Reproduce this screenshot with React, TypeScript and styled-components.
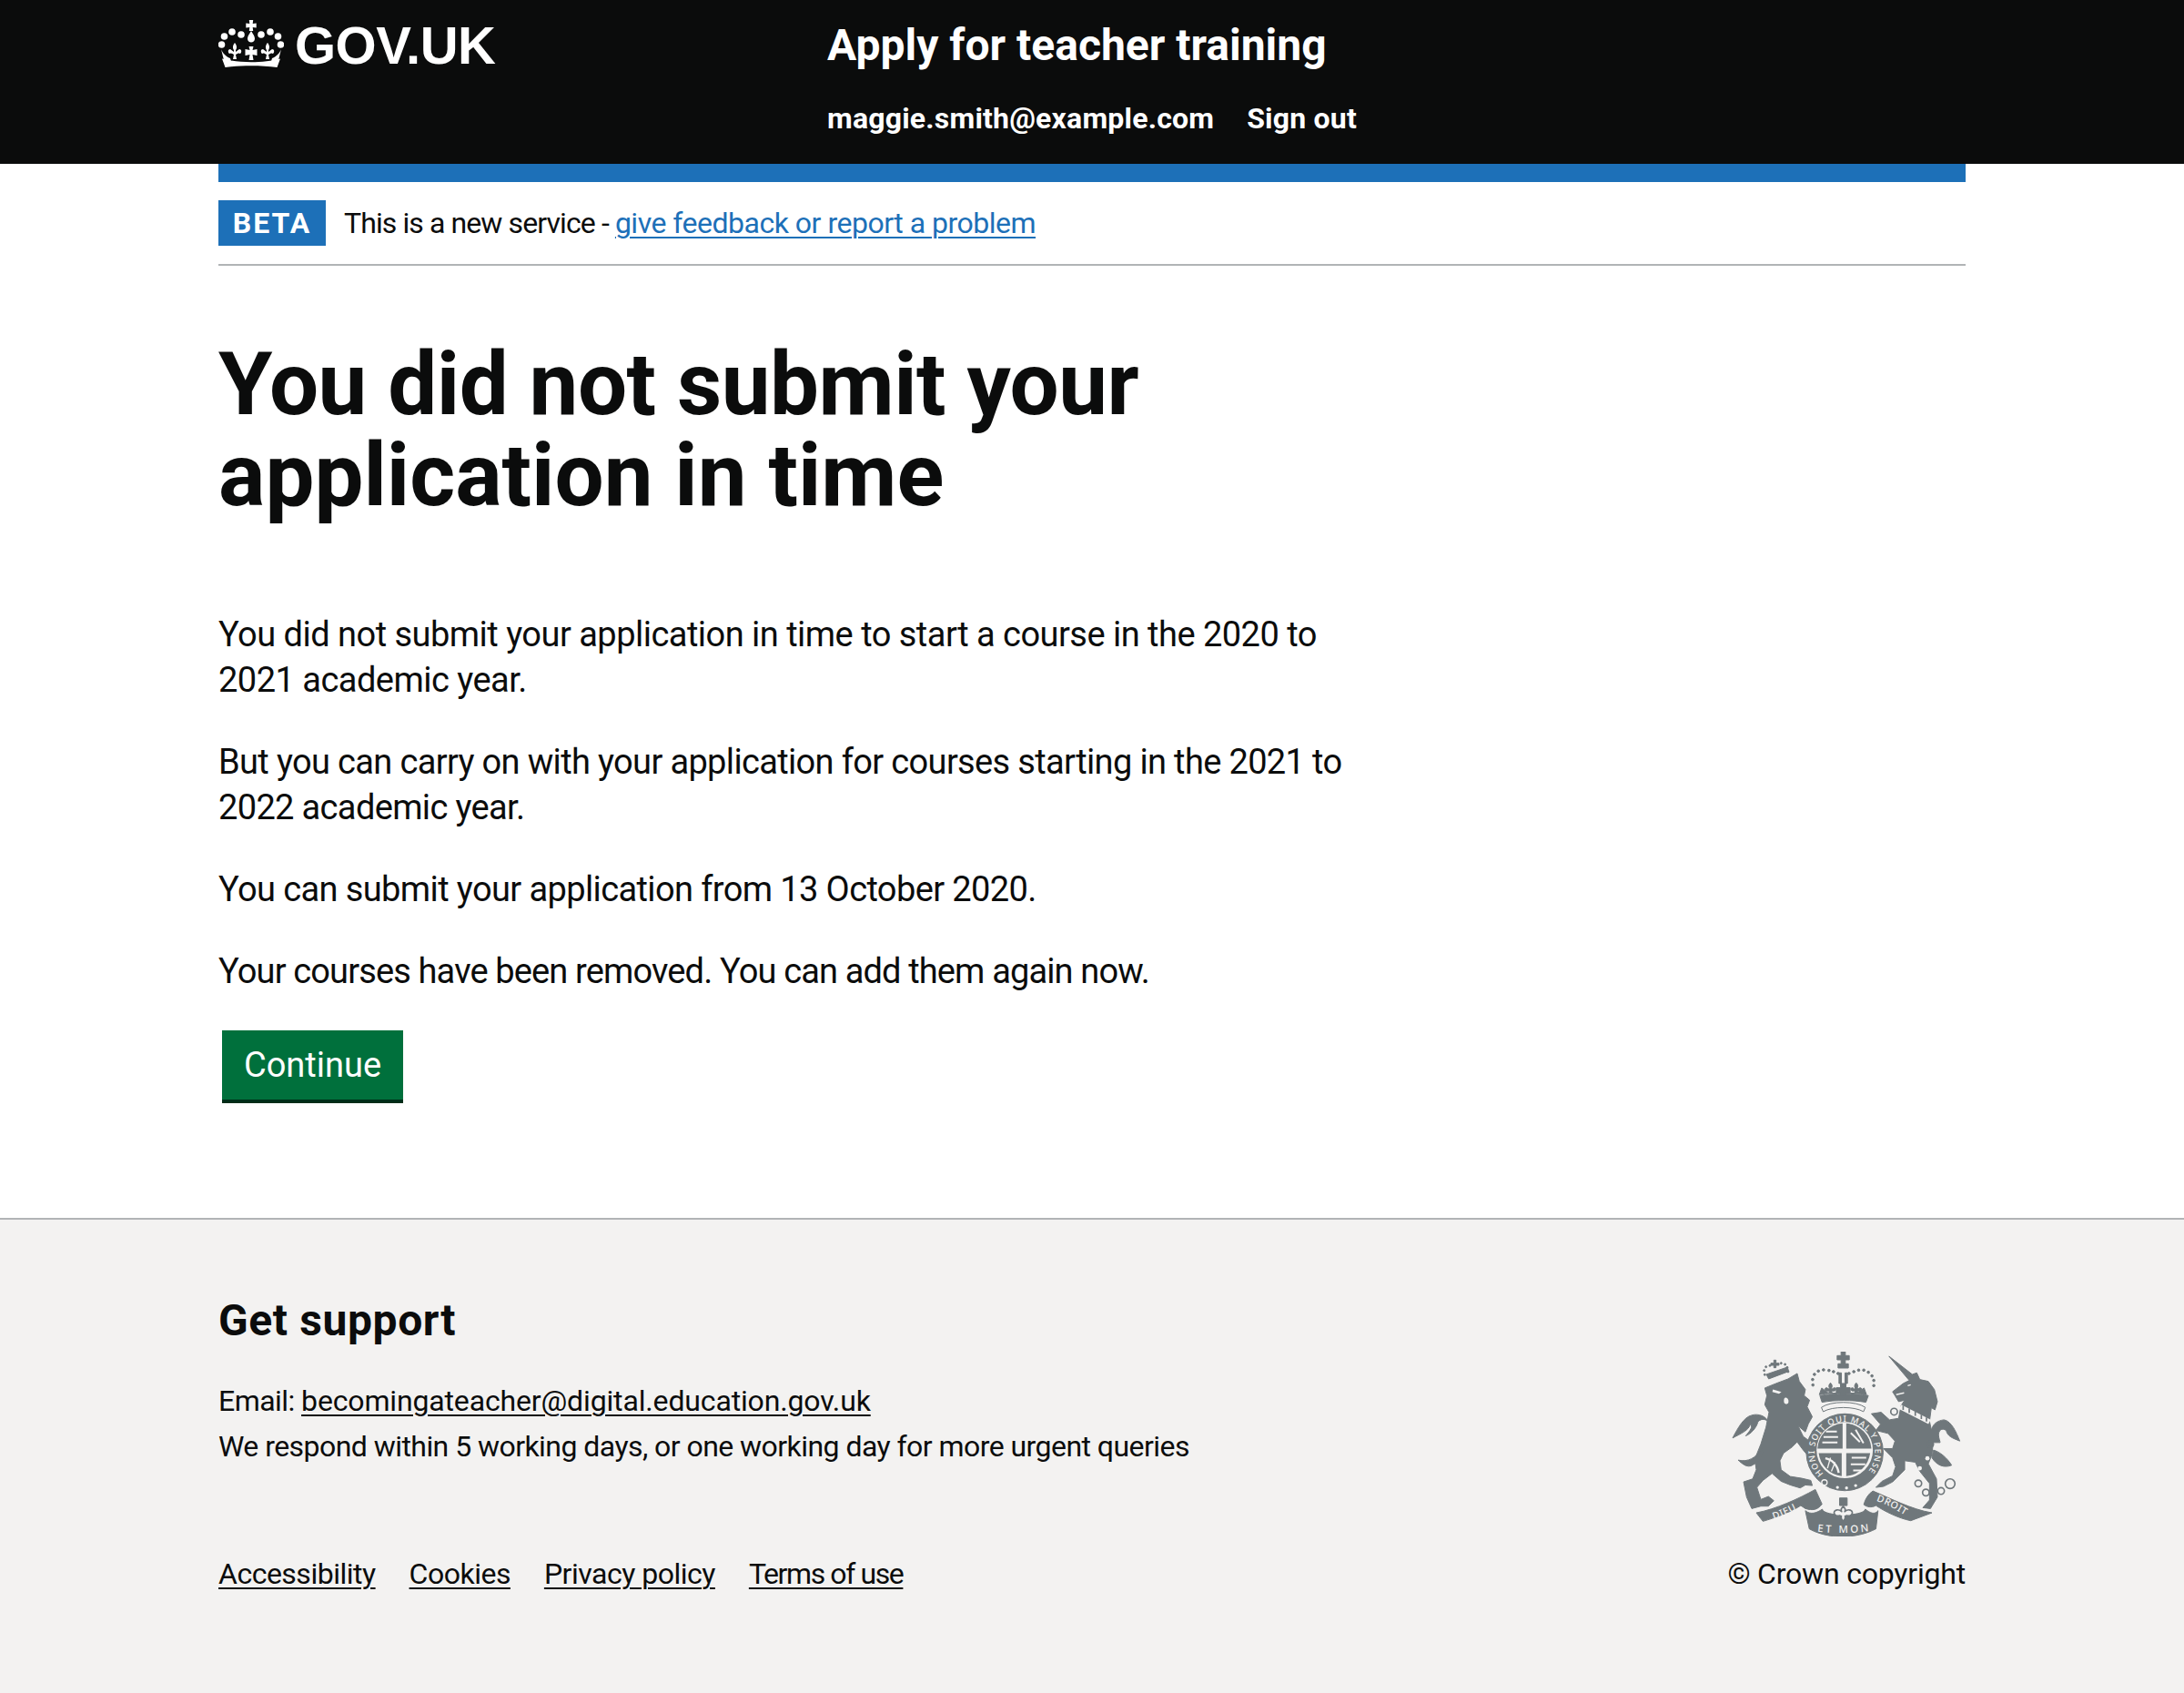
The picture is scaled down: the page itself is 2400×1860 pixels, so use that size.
import styled, { createGlobalStyle } from "styled-components";

const GlobalStyle = createGlobalStyle`
  html, body {
    margin: 0;
    padding: 0;
    background: #ffffff;
    font-family: "Roboto", Arial, sans-serif;
    color: #0b0c0c;
  }
`;

const Page = styled.div`
  width: 2400px;
  height: 1860px;
  display: flex;
  flex-direction: column;
`;
const Container = styled.div`
  width: 1920px;
  margin: 0 auto;
`;
const Header = styled.header`
  background: #0b0c0c;
  height: 180px;
  color: #fff;
  flex: none;
`;
const HeaderInner = styled(Container)`
  display: flex;
`;
const Logo = styled.a`
  width: 669px;
  height: 98px;
  display: flex;
  align-items: center;
  gap: 12px;
  color: #fff;
  font-family: "Liberation Sans", Arial, sans-serif;
  font-weight: 700;
  font-size: 58px;
  letter-spacing: -0.5px;
`;
const ServiceColumn = styled.div`
  display: flex;
  flex-direction: column;
`;
const ServiceName = styled.div`
  font-size: 48px;
  font-weight: 700;
  line-height: 100px;
`;
const HeaderNav = styled.nav`
  display: flex;
  gap: 36px;
  font-size: 32px;
  font-weight: 700;
  line-height: 60px;
  letter-spacing: 0.2px;
`;
const Main = styled(Container)`
  flex: 1;
`;
const BlueBar = styled.div`
  height: 20px;
  background: #1d70b8;
`;
const PhaseBanner = styled.div`
  display: flex;
  align-items: center;
  gap: 20px;
  padding: 20px 0;
  border-bottom: 2px solid #b1b4b6;
  font-size: 32px;
`;
const PhaseTag = styled.strong`
  display: block;
  background: #1d70b8;
  color: #fff;
  width: 118px;
  height: 50px;
  line-height: 50px;
  text-align: center;
  font-size: 32px;
  font-weight: 700;
  letter-spacing: 2px;
`;
const PhaseText = styled.span`
  letter-spacing: -0.9px;
`;
const BlueLink = styled.a`
  color: #1d70b8;
  letter-spacing: -0.5px;
  text-decoration: underline;
  text-decoration-thickness: 2px;
  text-underline-offset: 4px;
`;
const Title = styled.h1`
  margin: 80px 0 100px;
  font-size: 96px;
  line-height: 100px;
  font-weight: 700;
`;
const TitleLine = styled.span<{ $tracking: number }>`
  display: block;
  letter-spacing: ${(p) => p.$tracking}px;
`;
const Paragraph = styled.p<{ $tracking: number }>`
  margin: 0 0 40px;
  width: 1280px;
  font-size: 38px;
  line-height: 50px;
  letter-spacing: ${(p) => p.$tracking}px;
`;
const ContinueButton = styled.button`
  display: block;
  margin: 0 0 0 4px;
  width: 199px;
  height: 76px;
  border: 0;
  padding: 0;
  background: #00703c;
  box-shadow: 0 4px 0 #002d18;
  color: #fff;
  font-family: inherit;
  font-size: 38px;
  line-height: 1;
`;
const Footer = styled.footer`
  flex: none;
  height: 522px;
  box-sizing: border-box;
  background: #f3f2f1;
  border-top: 2px solid #b1b4b6;
  padding-top: 86px;
`;
const FooterInner = styled(Container)`
  display: flex;
  justify-content: space-between;
  align-items: flex-end;
`;
const SupportTitle = styled.h2`
  margin: 0 0 38px;
  font-size: 48px;
  line-height: 50px;
  font-weight: 700;
  letter-spacing: 0.6px;
`;
const SupportLine = styled.div`
  font-size: 32px;
  line-height: 50px;
  letter-spacing: -0.55px;
`;
const FooterLinks = styled.ul`
  list-style: none;
  margin: 90px 0 0;
  padding: 0;
  display: flex;
  gap: 37px;
  font-size: 32px;
  line-height: 50px;
  letter-spacing: -0.5px;
`;
const FooterLink = styled.a<{ $tracking?: number }>`
  color: #0b0c0c;
  letter-spacing: ${(p) => (p.$tracking === undefined ? "inherit" : `${p.$tracking}px`)};
  text-decoration: underline;
  text-decoration-thickness: 2px;
  text-underline-offset: 4px;
`;
const Copyright = styled.div`
  display: flex;
  flex-direction: column;
  align-items: flex-end;
  font-size: 32px;
  line-height: 50px;
  letter-spacing: -0.2px;
`;
const Crest = styled.svg`
  display: block;
  width: 252px;
  height: 203px;
  margin: 0 5px 16px 0;
`;

const logoFleur =
  "M0-10C2.5-7 2.5-4 1-2v2l4-3c2.500 0 3 3 1 5-1-1-3-.5-5 1l1 5h-4l1-5c-2-1.500-4-2-5-1-2-2-1.500-5 1-5l4 3v-2c-1.500-2-1.500-5 1-8z";

const CrownLogo = () => (
  <svg width="72" height="54" viewBox="0 0 72 54" fill="#fff" aria-hidden="true">
    <path d="M33.800 0h4.400l-.5 4 4-.5v5l-4-.5.5 4h-4.400l.5-4-4 .5v-5l4 .5z" />
    <path d="M36 12c2.500 4 4 6 4 8.500 0 2.500-2 4-4 4s-4-1.500-4-4c0-2.500 1.500-4.500 4-8.500z" />
    <circle cx="15" cy="13" r="3.800" />
    <circle cx="25" cy="16" r="3.800" />
    <circle cx="47" cy="16" r="3.800" />
    <circle cx="57" cy="13" r="3.800" />
    <circle cx="6.500" cy="18" r="3.800" />
    <circle cx="65.500" cy="18" r="3.800" />
    <circle cx="3.500" cy="27" r="3.800" />
    <circle cx="68.500" cy="27" r="3.800" />
    <path d={logoFleur} transform="translate(18 35)" />
    <path d={logoFleur} transform="translate(54 35)" />
    <path d="M33.500 29h5l-1 4 5-1v7l-5-1 1 6h-5l1-6-5 1v-7l5 1z" />
    <path d="M7.500 52C25 49.500 47 49.500 64.500 52L68 42.500C50 47.500 22 47.500 4 42.500z" />
    <path d="M3 32c1.500 4 5 8 10 10l1 3.500-8-1.500z" />
    <path d="M69 32c-1.500 4-5 8-10 10l-1 3.500 8-1.500z" />
  </svg>
);

const dots = (points: [number, number][], r: number) =>
  points.map(([cx, cy]) => <circle key={`${cx}-${cy}`} cx={cx} cy={cy} r={r} />);

const Fleur = ({ x, y }: { x: number; y: number }) => (
  <path
    transform={`translate(${x} ${y})`}
    d="M0-22c6 6 7 12 3 18l4 2c3-5 10-5 11 0 0 4-3 7-7 7l-7-1 1 6H-5l1-6-7 1c-4 0-7-3-7-7 1-5 8-5 11 0l4-2c-4-6-3-12 3-18z"
  />
);

const RoyalCrest = () => (
  <Crest viewBox="70 80 755 610" aria-hidden="true">
    <defs>
      <path id="crest-garter" d="M372 483A100 100 0 1 1 512 483" />
      <path id="crest-left" d="M208 634C245 622 285 602 316 582" />
      <path id="crest-right" d="M546 572C588 586 628 612 664 634" />
      <path id="crest-mid" d="M352 674C400 680 480 680 526 672" />
    </defs>
    <g fill="#6f777b" stroke="#6f777b" strokeWidth="3" strokeLinejoin="round">
      {/* lion */}
      <path d="M178 200L215 185 255 170 285 152 292 178 312 205 308 225 326 240 318 262 335 295 322 318 312 345 288 325 305 360 330 378 340 410 334 432 318 420 305 405 285 378 268 395 240 415 228 440 232 470 262 492 300 498 330 505 335 522 312 520 295 530 262 520 232 508 202 482 172 505 152 528 165 568 190 558 208 572 190 590 165 590 135 598 118 560 108 510 138 500 150 470 145 435 165 385 182 330 192 280 178 255 185 225Z" />
      <path d="M205 205l28 8-8 6-22-6zM246 232c8 0 12 8 10 16-2 6-12 6-14 0-2-7 0-16 4-16z" fill="#f3f2f1" stroke="none" />
      <path d="M135 290c-25 5-45 40-63 75 28-15 53-25 58-45 10 8 0 20-15 38 15-5 35-25 40-45 5-10 25-15 35 0-5-20-35-30-55-23z" />
      <path d="M168 400c-20 32-45 45-78 38 10 8 30 30 50 15 20-10 30-25 35-40z" />
      {/* lion crown */}
      <path d="M198 118h10v-10h7v10h10v7h-10v8h-7v-8h-10z" />
      <path d="M183 155l70-24 4 14-66 25z" />
      {dots(
        [[176, 142], [182, 130], [195, 126], [232, 118], [245, 122], [252, 132], [178, 156], [255, 146]],
        3
      )}
      {/* central crown */}
      <path d="M430 80h14v13h13v14h-13v13h-14v-13h-13V93h13z" />
      <path d="M420 120h34v14h-34z" />
      <path d="M423 150h8v35h-8zM443 150h8v35h-8z" />
      <path d="M360 225c50-8 110-8 160 0l-8 22c-45-8-100-8-145 0z" />
      <Fleur x={395} y={205} />
      <Fleur x={480} y={205} />
      <path d="M358 222l8-22 24 18 92-1 24-17 8 22c-50-8-106-8-156 0z" />
      <path d="M428 185h18v14h14v16h-14v8h-18v-8h-14v-16h14z" />
      {dots(
        [
          [337, 190], [336, 172], [342, 155], [355, 144], [372, 140], [390, 142], [405, 146], [420, 152],
          [456, 152], [472, 146], [488, 141], [505, 141], [520, 148], [532, 160], [538, 175], [538, 192],
        ],
        4
      )}
      <path d="M365 264c30-22 115-22 145 0l-6 14c-30-18-103-18-133 0z" fill="#f3f2f1" />
      {/* unicorn */}
      <path d="M588 95L665 155 680 150 690 172 718 178 738 205 748 245 740 272 728 265 722 310 735 370 730 420 718 450 745 500 748 560 725 598 700 595 722 570 722 515 690 475 675 445 640 440 640 470 600 510 570 525 545 528 565 508 600 490 610 460 600 430 570 400 600 400 608 375 585 350 545 340 560 320 530 285 562 280 590 305 620 300 628 258 640 240 620 245 608 225 600 212 635 185 655 175Z" />
      <path d="M612 222l26-6M650 192l10-3" stroke="#f3f2f1" strokeWidth="4" fill="none" />
      <path d="M625 262l97 50" stroke="#f3f2f1" strokeWidth="16" />
      <path d="M635 258v14M655 268v14M675 278v14M695 288v14M712 297v14" strokeWidth="5" />
      <path d="M735 380c-15-30-10-70 35-75 25 5 40 40 52 70-25-10-40-15-45-35-15-10-25 0-25 15 0 10 5 20 5 25z" />
      <path d="M735 405c20 5 45 25 60 50-25 10-50 0-65-25z" />
      <circle cx="715" cy="432" r="7" fill="#f3f2f1" stroke="none" />
      <circle cx="690" cy="465" r="7" fill="#f3f2f1" stroke="none" />
      {/* garter */}
      <circle cx="442" cy="412" r="127" />
      <circle cx="442" cy="405" r="93" fill="#f3f2f1" stroke="none" />
      <path d="M435 400H352A88 88 0 0 1 435 317ZM447 400V317A88 88 0 0 1 530 400ZM432 415H356A88 88 0 0 0 432 491ZM447 415H526A88 88 0 0 1 447 491Z" stroke="none" />
      <path d="M372 362h48M368 380h50M380 344h36M462 348l30 30M478 338l26 44M465 430h48M462 452h48M470 472h28" stroke="#f3f2f1" strokeWidth="6" fill="none" />
      <path d="M378 432c22 4 40 22 44 48" stroke="#f3f2f1" strokeWidth="7" fill="none" />
      <path d="M395 430l-10 35M410 445l-12 30" stroke="#f3f2f1" strokeWidth="4" fill="none" />
      {/* ribbons */}
      <path d="M150 612C215 600 290 565 345 535L367 583C352 603 337 605 312 598L297 588C257 613 212 628 172 640Z" />
      <path d="M505 585C510 565 520 550 535 540 595 565 660 600 730 612L660 638C620 630 575 608 545 588 530 596 515 593 505 585Z" />
      <path d="M312 605c18 15 38 7 56-5 4 25 137 25 142 0 15 12 30 20 42 5l-7 60c-65 34-160 34-220 0z" />
      {/* fleur */}
      <path d="M425 563h25v25h-25z" />
      <path
        d="M437 590c8 8 9 12 5 18 8-8 22-8 25 2 1 9-8 14-18 11l-6 2c2 6-1 12-6 16-5-4-8-10-6-16l-6-2c-10 3-19-2-18-11 3-10 17-10 25-2-4-6-3-10 5-18z"
        fill="#f3f2f1"
        strokeWidth="5"
      />
    </g>
    <g fill="#f3f2f1">{dots([[418, 528], [448, 530], [478, 522]], 5)}</g>
    <circle cx="375" cy="512" r="9" fill="none" stroke="#f3f2f1" strokeWidth="4" />
    <g fill="none" stroke="#6f777b" strokeWidth="5">
      <circle cx="605" cy="278" r="11" />
      <circle cx="685" cy="515" r="11" />
      <circle cx="710" cy="545" r="11" />
      <circle cx="760" cy="540" r="11" />
      <circle cx="790" cy="516" r="16" />
      <circle cx="725" cy="386" r="10" />
    </g>
    <g fill="#f3f2f1" fontFamily="'Noto Sans', sans-serif" fontWeight="500">
      <text fontSize="28">
        <textPath href="#crest-garter" textLength="460">HONI SOIT QUI MAL Y PENSE</textPath>
      </text>
      <text fontSize="32" letterSpacing="2">
        <textPath href="#crest-left">DIEU</textPath>
      </text>
      <text fontSize="32" letterSpacing="2">
        <textPath href="#crest-right">DROIT</textPath>
      </text>
      <text fontSize="34">
        <textPath href="#crest-mid" textLength="170">ET MON</textPath>
      </text>
    </g>
  </Crest>
);

export default function App() {
  return (
    <>
      <GlobalStyle />
      <Page>
        <Header>
          <HeaderInner>
            <Logo>
              <CrownLogo />
              GOV.UK
            </Logo>
            <ServiceColumn>
              <ServiceName>Apply for teacher training</ServiceName>
              <HeaderNav>
                <span>maggie.smith@example.com</span>
                <span>Sign out</span>
              </HeaderNav>
            </ServiceColumn>
          </HeaderInner>
        </Header>
        <Main>
          <BlueBar />
          <PhaseBanner>
            <PhaseTag>BETA</PhaseTag>
            <PhaseText>
              This is a new service - <BlueLink href="#">give feedback or report a problem</BlueLink>
            </PhaseText>
          </PhaseBanner>
          <Title>
            <TitleLine $tracking={-0.5}>You did not submit your</TitleLine>
            <TitleLine $tracking={0}>application in time</TitleLine>
          </Title>
          <Paragraph $tracking={-0.52}>
            You did not submit your application in time to start a course in the 2020 to 2021 academic year.
          </Paragraph>
          <Paragraph $tracking={-0.65}>
            But you can carry on with your application for courses starting in the 2021 to 2022 academic year.
          </Paragraph>
          <Paragraph $tracking={-0.61}>You can submit your application from 13 October 2020.</Paragraph>
          <Paragraph $tracking={-0.86}>Your courses have been removed. You can add them again now.</Paragraph>
          <ContinueButton>Continue</ContinueButton>
        </Main>
        <Footer>
          <FooterInner>
            <div>
              <SupportTitle>Get support</SupportTitle>
              <SupportLine>
                Email: <FooterLink href="#" $tracking={-0.15}>becomingateacher@digital.education.gov.uk</FooterLink>
              </SupportLine>
              <SupportLine>We respond within 5 working days, or one working day for more urgent queries</SupportLine>
              <FooterLinks>
                <li><FooterLink href="#">Accessibility</FooterLink></li>
                <li><FooterLink href="#">Cookies</FooterLink></li>
                <li><FooterLink href="#">Privacy policy</FooterLink></li>
                <li><FooterLink href="#" $tracking={-1.4}>Terms of use</FooterLink></li>
              </FooterLinks>
            </div>
            <Copyright>
              <RoyalCrest />© Crown copyright
            </Copyright>
          </FooterInner>
        </Footer>
      </Page>
    </>
  );
}
